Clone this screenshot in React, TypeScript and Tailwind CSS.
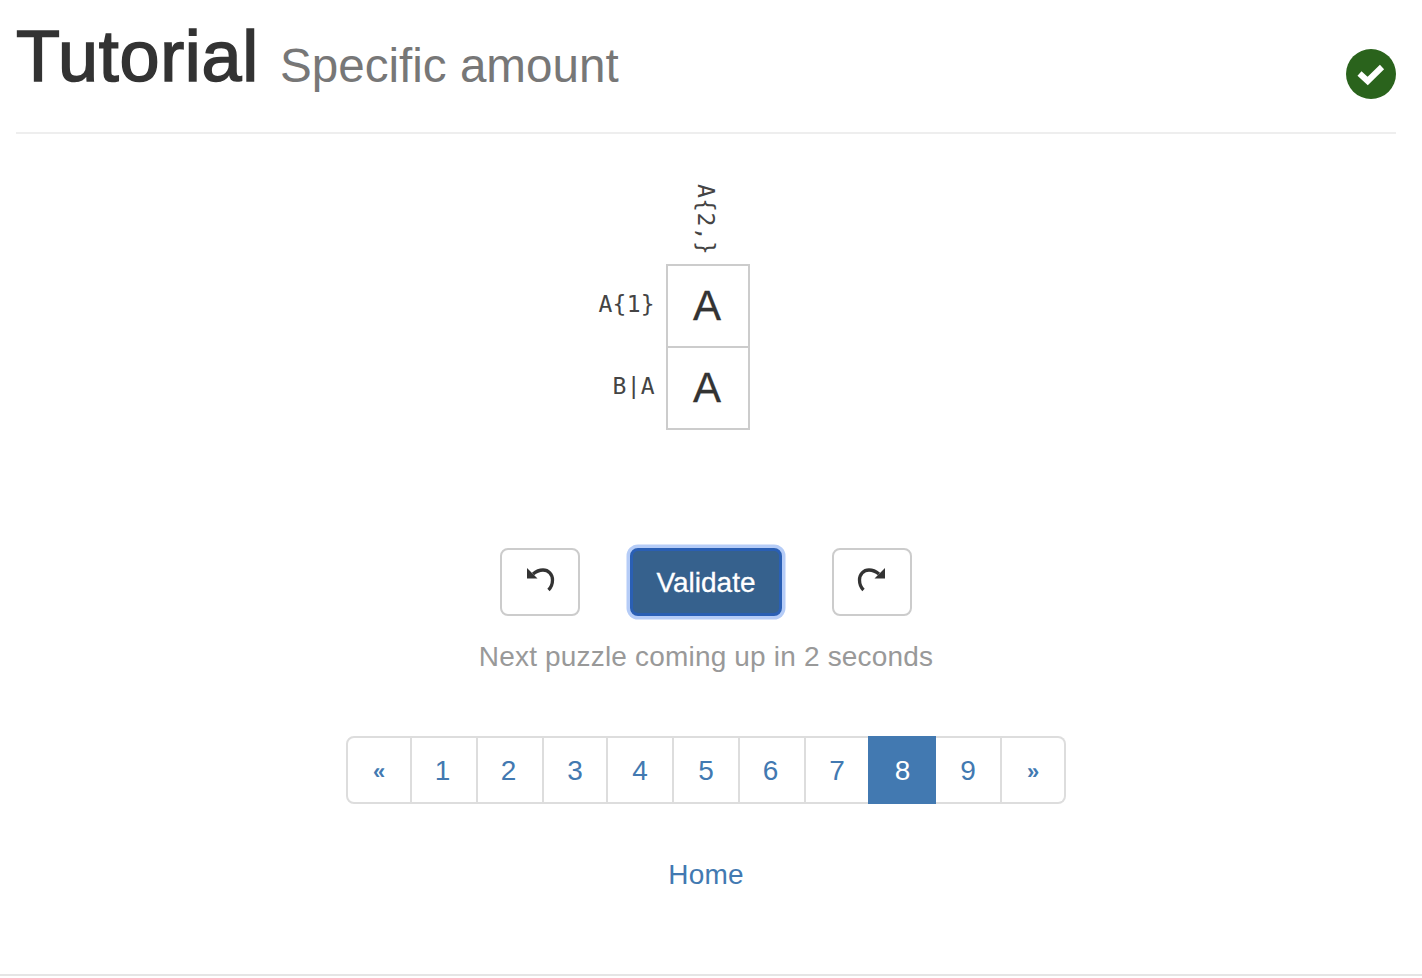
const PAGES = [
  { label: "1", width: "w-[66px] pr-[3px]" },
  { label: "2", width: "w-[66px] pr-[3px]" },
  { label: "3", width: "w-[64px]" },
  { label: "4", width: "w-[66px]" },
  { label: "5", width: "w-[66px]" },
  { label: "6", width: "w-[66px] pr-[3px]" },
  { label: "7", width: "w-[62px] !border-r-0" },
  { label: "8", width: "w-[68px] pl-[1px]" },
  { label: "9", width: "w-[66px]" },
];

function ArrowIcon({ flip }: { flip?: boolean }) {
  return (
    <svg width="30" height="26" viewBox="0 0 30 26" className={flip ? "-scale-x-100" : ""}>
      <path d="M2 1 L2 11.5 L12.5 11.5 Z" fill="#333" />
      <path
        d="M8 7 C11 4.5 14 3 18 3 C23.5 3 27.5 7.5 27.5 13 C27.5 17 26 20.5 23.5 23"
        fill="none"
        stroke="#333"
        strokeWidth="3.3"
      />
    </svg>
  );
}

function Row({ label, value }: { label: string; value: string }) {
  return (
    <>
      <div className="justify-self-end self-center pr-[11px] pb-[6px] font-['DejaVu_Sans_Mono',monospace] text-[23px] tracking-[0.3px] text-[#444]">
        {label}
      </div>
      <div className="-mt-[2px] flex h-[84px] w-[84px] items-center justify-center border-2 border-[#ccc] pr-[2px] pb-[2px] text-[42px] text-[#333] [-webkit-text-stroke:0.3px_#333]">
        {value}
      </div>
      <div />
    </>
  );
}

function PageLink({ children, active, className }: { children: string; active?: boolean; className: string }) {
  return (
    <a
      className={`flex h-[68px] items-center justify-center pt-[2px] ${
        active
          ? "bg-[#4279b1] text-white"
          : "border-y-2 border-r-2 border-[#ddd] text-[#4279b1]"
      } ${className}`}
    >
      {children}
    </a>
  );
}

export default function App() {
  return (
    <div className="min-h-[978px] bg-white font-['Liberation_Sans',Arial,sans-serif] text-[#333]">
      <div className="pl-4 pr-[26px]">
        {/* header */}
        <div className="flex h-[134px] items-start justify-between border-b-2 border-[#eee]">
          <h1 className="mt-[17px] text-[72px] leading-[79px] tracking-[0.7px] [-webkit-text-stroke:1.6px_#333]">
            Tutorial
            <small className="relative top-[1px] ml-[21px] text-[47.6px] tracking-[0px] text-[#777] [-webkit-text-stroke:0px_#777]">
              Specific amount
            </small>
          </h1>
          <svg width="50" height="50" viewBox="0 0 50 50" className="mt-[49px]">
            <circle cx="25" cy="25" r="25" fill="#2a631c" />
            <path d="M13.5 24.5 L21.7 32 L36 18" fill="none" stroke="#fff" strokeWidth="6" />
          </svg>
        </div>

        {/* puzzle */}
        <div className="mt-[48px] grid grid-cols-[1fr_84px_1fr] pl-[4px]">
          <div />
          <div className="flex h-[84px] items-start justify-center pt-[2px] pr-[4px]">
            <span className="font-['DejaVu_Sans_Mono',monospace] text-[23px] leading-[24px] tracking-[0.4px] text-[#444] [writing-mode:vertical-rl]">
              A{"{2,}"}
            </span>
          </div>
          <div />
          <Row label="A{1}" value="A" />
          <Row label="B|A" value="A" />
        </div>

        {/* actions */}
        <div className="mt-[118px] flex justify-center gap-[50px]">
          <button className="flex h-[68px] w-[80px] items-center justify-center rounded-[8px] border-2 border-[#ccc] bg-white pb-[4px]">
            <ArrowIcon />
          </button>
          <button className="h-[68px] w-[152px] rounded-[8px] border-[3px] border-[#2a5fb4] bg-[#36618d] pt-[2px] text-[28px] text-white shadow-[0_0_0_3.5px_#b5ccf7] [-webkit-text-stroke:0.3px_#fff]">
            Validate
          </button>
          <button className="flex h-[68px] w-[80px] items-center justify-center rounded-[8px] border-2 border-[#ccc] bg-white pb-[4px]">
            <ArrowIcon flip />
          </button>
        </div>

        <p className="mt-[25px] text-center text-[28px] leading-[32px] tracking-[0.18px] text-[#999]">
          Next puzzle coming up in 2 seconds
        </p>

        {/* pagination */}
        <div className="mt-[63px] flex justify-center">
          <PageLink className="w-[66px] rounded-l-[8px] border-l-2 text-[22px] font-bold">«</PageLink>
          {PAGES.map((p) => (
            <PageLink key={p.label} active={p.label === "8"} className={`text-[28px] ${p.width}`}>
              {p.label}
            </PageLink>
          ))}
          <PageLink className="w-[64px] rounded-r-[8px] text-[22px] font-bold">»</PageLink>
        </div>

        <div className="mt-[55px] text-center">
          <a className="text-[28px] leading-[32px] tracking-[0.2px] text-[#4279b1]">Home</a>
        </div>
      </div>

      {/* footer rule */}
      <div className="mt-[83px] h-[2px] bg-[#e5e5e5]" />
    </div>
  );
}
